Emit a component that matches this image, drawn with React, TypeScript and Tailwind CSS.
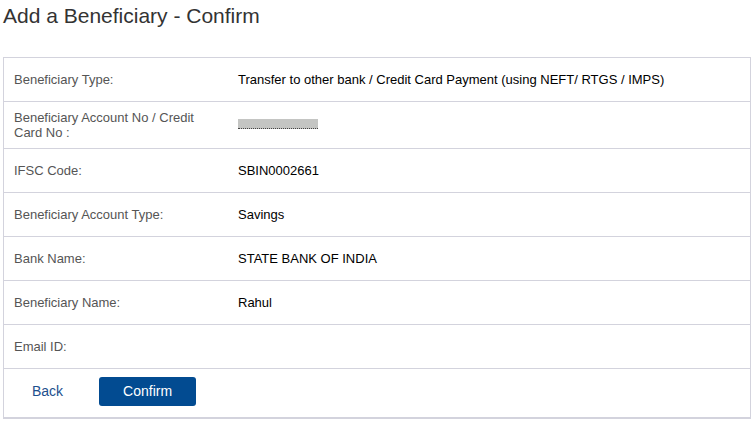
import React from "react";

const rows: { label: string; value: React.ReactNode }[] = [
  {
    label: "Beneficiary Type:",
    value: "Transfer to other bank / Credit Card Payment (using NEFT/ RTGS / IMPS)",
  },
  {
    label: "Beneficiary Account No / Credit Card No :",
    value: (
      // masked account number
      <span className="relative block h-[14px] w-[80px]">
        <span className="absolute left-0 top-[1px] h-[10px] w-[80px] bg-[#c4c5c3]" />
        <span className="absolute left-0 top-[10px] w-[80px] border-b border-dotted border-[#444]" />
      </span>
    ),
  },
  { label: "IFSC Code:", value: "SBIN0002661" },
  { label: "Beneficiary Account Type:", value: "Savings" },
  { label: "Bank Name:", value: "STATE BANK OF INDIA" },
  { label: "Beneficiary Name:", value: "Rahul" },
  { label: "Email ID:", value: "" },
];

export default function App() {
  return (
    <div
      className="min-h-screen bg-white pl-[3px] pr-[5px]"
      style={{ fontFamily: '"Liberation Sans", Arial, sans-serif' }}
    >
      <h1 className="text-[21px] leading-[31px] font-normal text-[#333]">
        Add a Beneficiary - Confirm
      </h1>

      <div className="mt-[26px] border border-b-2 border-[#d3d3dd]">
        {rows.map((row) => (
          <div
            key={row.label}
            className="flex min-h-[44px] items-center border-b border-[#d3d3dd] py-[8px] text-[13px] leading-[15px]"
          >
            <div className="w-[224px] shrink-0 px-[10px] text-[#555]">{row.label}</div>
            <div className="px-[10px] text-black">{row.value}</div>
          </div>
        ))}

        <div className="flex items-center gap-[36px] pl-[28px] pt-[8px] pb-[11px]">
          <a href="#" className="text-[14px] text-[#1d4f8d]">
            Back
          </a>
          <button className="h-[29px] w-[97px] rounded-[3px] bg-[#024b91] text-[14px] text-white">
            Confirm
          </button>
        </div>
      </div>
    </div>
  );
}
